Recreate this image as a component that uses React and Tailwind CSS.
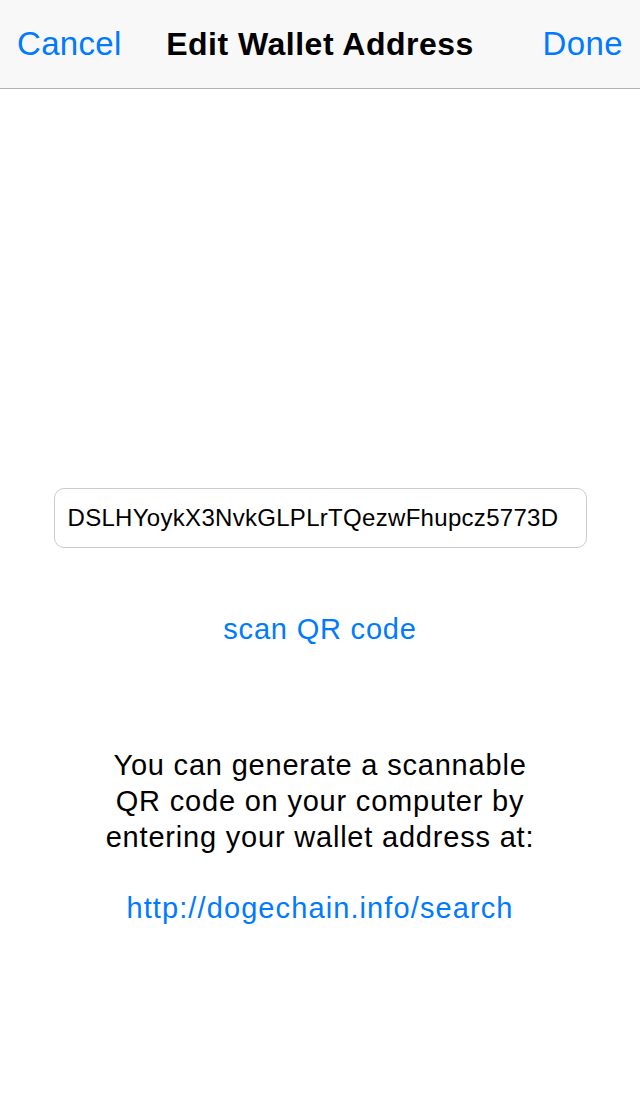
export default function App() {
  const font = { fontFamily: '"Liberation Sans", Arial, sans-serif' };
  return (
    <div className="w-[640px] h-[1096px] bg-white flex flex-col" style={font}>
      <div className="h-[89px] bg-[#f8f8f8] border-b border-[#b2b2b2] flex items-center justify-between px-[17px] pb-[1px] relative">
        <button className="text-[33px] text-[#007aff] leading-none tracking-[0.3px]">Cancel</button>
        <div className="absolute left-0 right-0 text-center font-bold text-[32px] text-black leading-none tracking-[0.5px] pointer-events-none">
          Edit Wallet Address
        </div>
        <button className="text-[33px] text-[#007aff] leading-none tracking-[0.4px]">Done</button>
      </div>

      <div className="flex flex-col items-center">
        <div className="mt-[399px] w-[533px] h-[60px] border border-[#cccccc] rounded-[10px] flex items-center px-[13px]">
          <span className="text-[24px] text-black leading-none tracking-[0.3px]">DSLHYoykX3NvkGLPLrTQezwFhupcz5773D</span>
        </div>

        <button className="mt-[63px] text-[29px] leading-[36px] text-[#007aff] tracking-[0.8px]">scan QR code</button>

        <p className="mt-[100px] w-[500px] text-center text-[29px] leading-[36px] text-black tracking-[0.8px]">
          You can generate a scannable<br />
          QR code on your computer by<br />
          entering your wallet address at:
        </p>

        <a className="mt-[35px] text-[29px] leading-[36px] text-[#007aff] tracking-[1.1px]">http://dogechain.info/search</a>
      </div>
    </div>
  );
}
